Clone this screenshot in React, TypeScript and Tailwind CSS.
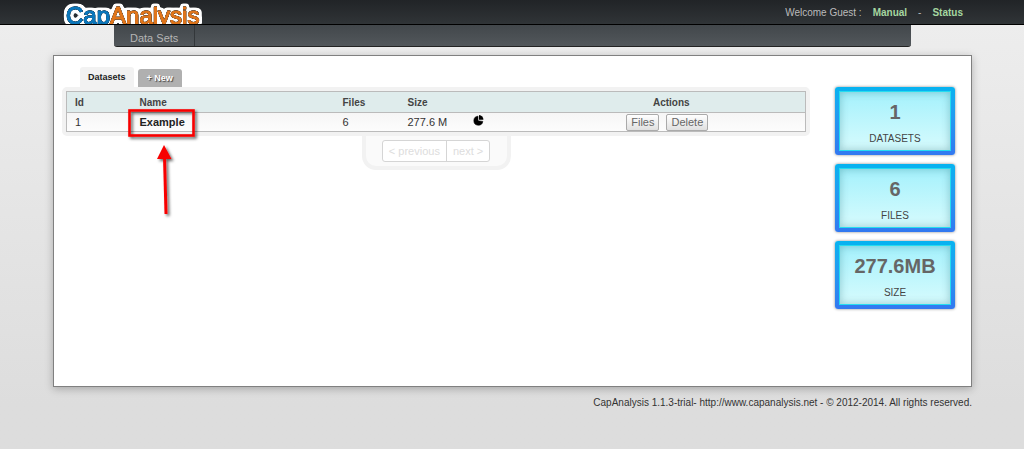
import { clsx } from 'clsx';

interface Dataset {
  id: number;
  name: string;
  files: number;
  size: string;
}

const datasets: Dataset[] = [{ id: 1, name: 'Example', files: 6, size: '277.6 M' }];

const stats = [
  { value: '1', label: 'DATASETS' },
  { value: '6', label: 'FILES' },
  { value: '277.6MB', label: 'SIZE' },
];

function Logo() {
  return (
    <svg width="144" height="24" viewBox="0 0 144 24" className="block" fontSize="24" strokeLinejoin="round">
      <defs>
        {/* dark rim, then a thick white one around the letters */}
        <filter id="rim" filterUnits="userSpaceOnUse" x="0" y="0" width="144" height="32" colorInterpolationFilters="sRGB">
          <feMorphology in="SourceAlpha" operator="dilate" radius="2" result="grown" />
          <feGaussianBlur in="grown" stdDeviation="1.2" result="wideBlur" />
          <feComponentTransfer in="wideBlur" result="wide">
            <feFuncR type="linear" slope="0" intercept="1" />
            <feFuncG type="linear" slope="0" intercept="1" />
            <feFuncB type="linear" slope="0" intercept="1" />
            <feFuncA type="linear" slope="5" intercept="-0.6" />
          </feComponentTransfer>
          <feGaussianBlur in="SourceAlpha" stdDeviation="0.7" result="thinBlur" />
          <feComponentTransfer in="thinBlur" result="thin">
            <feFuncA type="linear" slope="2.4" />
          </feComponentTransfer>
          <feFlood floodColor="#39444c" />
          <feComposite in2="thin" operator="in" result="dark" />
          <feMerge>
            <feMergeNode in="wide" />
            <feMergeNode in="dark" />
            <feMergeNode in="SourceGraphic" />
          </feMerge>
        </filter>
      </defs>
      <text x="5" y="24" strokeWidth="1" filter="url(#rim)">
        <tspan fill="#0b78bd" stroke="#0b78bd">Cap</tspan>
        <tspan fill="#e2761b" stroke="#e2761b">Analysis</tspan>
      </text>
    </svg>
  );
}

function PieIcon() {
  return (
    <svg width="11" height="11" viewBox="0 0 11 11" className="mb-[3px] block">
      <path d="M5 1.2A4.5 4.5 0 1 0 9.8 6.4L5 5.8Z" stroke="#000" strokeWidth="0.6" />
      <path d="M6 0a4.6 4.6 0 0 1 4.4 4.8L6 4.8Z" />
    </svg>
  );
}

// red frame and arrow pointing at the dataset to open
function Callout() {
  return (
    <svg width="76" height="116" viewBox="0 0 76 116" className="absolute -top-2 left-[-14px] z-10 pointer-events-none">
      <defs>
        <filter id="shade" x="-20%" y="-20%" width="150%" height="150%">
          <feDropShadow dx="2" dy="2" stdDeviation="1.5" floodOpacity="0.6" />
        </filter>
      </defs>
      <g filter="url(#shade)">
        <rect x="3.5" y="4.5" width="64" height="25" fill="none" stroke="#f80404" strokeWidth="2.6" />
        <path d="M38.5 51L40 108" stroke="#f80404" strokeWidth="3" />
        <path d="M38 39L45.5 53H31Z" fill="#f80404" />
      </g>
    </svg>
  );
}

function DatasetTable() {
  return (
    <div className="rounded-[5px] border-4 border-[#f2f2f2]">
      <table className="w-full table-fixed border-collapse border border-[#bbb] text-left text-[11px] text-[#333]">
        <colgroup>
          <col className="w-[65px]" />
          <col className="w-[203px]" />
          <col className="w-[65px]" />
          <col className="w-[65px]" />
          <col className="w-[73px]" />
          <col />
        </colgroup>
        <thead>
          <tr className="h-[21px] border-b border-[#bbb] bg-[#dfecec] text-[10px] text-[#444]">
            <th className="pl-2">Id</th>
            <th className="pl-2">Name</th>
            <th className="pl-2">Files</th>
            <th className="pl-2">Size</th>
            <th></th>
            <th className="text-center">Actions</th>
          </tr>
        </thead>
        <tbody>
          {datasets.map(d => (
            <tr key={d.id} className="h-[19px] bg-linear-to-b from-[#f6f6f6] to-[#fdfdfd]">
              <td className="pl-2">{d.id}</td>
              <td className="pl-2">
                <div className="relative">
                  <a href="#example" className="font-bold text-[#222]">{d.name}</a>
                  <Callout />
                </div>
              </td>
              <td className="pl-2">{d.files}</td>
              <td className="pl-2">{d.size}</td>
              <td className="pl-2"><PieIcon /></td>
              <td>
                <div className="flex justify-center gap-[7px] pr-2">
                  <RowButton label="Files" />
                  <RowButton label="Delete" />
                </div>
              </td>
            </tr>
          ))}
        </tbody>
      </table>
    </div>
  );
}

function RowButton({ label }: { label: string }) {
  return (
    <button type="button" className="h-[17px] rounded-xs border border-[#aaa] bg-linear-to-b from-white to-[#e0e0e0] px-1 text-[11px] leading-[15px] text-[#666]">
      {label}
    </button>
  );
}

function Pagination() {
  const item = 'px-1.5 text-[11px] leading-5 text-[#ddd]';
  return (
    <div className="mx-auto flex h-[34px] w-[149px] items-start justify-center rounded-b-[14px] border-4 border-t-0 border-[#f2f2f2] bg-[#fafafa] pt-1">
      <div className="flex rounded-[3px] border border-[#d5d5d5] bg-white">
        <button type="button" disabled className={clsx(item, 'border-r border-[#d5d5d5]')}>&lt; previous</button>
        <button type="button" disabled className={item}>next &gt;</button>
      </div>
    </div>
  );
}

function StatCard({ value, label }: { value: string; label: string }) {
  return (
    <div className="h-[68px] rounded-[3px] bg-linear-to-b from-[#05b3f0] to-[#3278f0] p-1 shadow-[0_0_3px_#888]">
      <div className="flex h-full flex-col items-center border border-[#25dcf0] bg-linear-to-b from-[#a4f1fc] to-[#d6fbfd] pt-2 shadow-[inset_0_0_8px_rgba(0,80,90,0.3)]">
        <div className="text-xl leading-6 font-bold text-[#666]">{value}</div>
        <div className="mt-[7px] text-[10px] leading-4 text-[#444]">{label}</div>
      </div>
    </div>
  );
}

export default function App() {
  return (
    <div className="min-h-screen bg-linear-to-b from-[#eee] to-[#ddd] to-90% font-['Liberation_Sans',Arial,sans-serif]">
      <header className="flex h-[25px] items-start justify-between border-b border-black bg-linear-to-b from-[#212427] to-[#303437] pr-[61px] pl-[61px]">
        <Logo />
        <div className="flex text-[10px] leading-[26px] text-[#bbb]">
          <span>Welcome Guest :</span>
          <a href="#manual" className="ml-[11px] font-bold text-[#a5d6a0]">Manual</a>
          <span className="mx-[11px]">-</span>
          <a href="#status" className="font-bold text-[#a5d6a0]">Status</a>
        </div>
      </header>

      <nav className="mr-[113px] ml-[114px] flex h-[22px] rounded-b-[3px] border-b border-[#222] bg-linear-to-b from-[#42474b] to-[#52575b]">
        <a href="#datasets" className="border-r border-[#33373a] px-4 text-[11px] leading-[26px] text-[#b5b5b5]">Data Sets</a>
      </nav>

      <main className="mr-[52px] ml-[53px] mt-2 flex min-h-[332px] gap-[25px] border border-[#808080] bg-white pr-4 pl-2 shadow-[0_2px_8px_rgba(0,0,0,0.25)]">
        <section className="min-w-0 flex-1 pt-[11px]">
          <div className="flex h-5 items-end gap-1 pl-[18px] text-[9px] font-bold">
            <a href="#datasets" className="rounded-t-[3px] bg-[#f2f2f2] px-2 leading-5 text-[#222]">Datasets</a>
            <a href="#new" className="rounded-t-[3px] bg-[#b0b0b0] px-[9px] leading-[18px] text-white [text-shadow:1px_1px_1px_#444]">+ New</a>
          </div>
          <DatasetTable />
          <Pagination />
        </section>
        <aside className="flex w-[120px] shrink-0 flex-col gap-[9px] pt-[31px]">
          {stats.map(s => <StatCard key={s.label} {...s} />)}
        </aside>
      </main>

      <footer className="mr-[52px] ml-[53px] pt-2 text-right text-[10px] leading-4 text-[#333]">
        CapAnalysis 1.1.3-trial- http://www.capanalysis.net - © 2012-2014. All rights reserved.
      </footer>
    </div>
  );
}
